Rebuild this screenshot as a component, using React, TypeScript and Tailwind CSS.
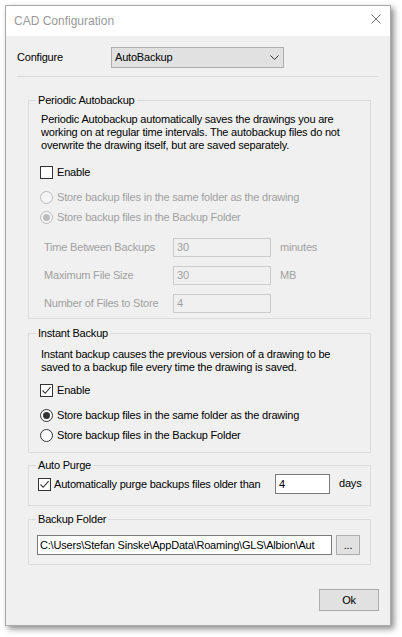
import type { ReactNode } from "react";

const font = { fontFamily: '"Liberation Sans", Arial, sans-serif' };

function CheckBox({ checked }: { checked?: boolean }) {
  return (
    <span className="w-[13px] h-[13px] shrink-0 border border-[#333333] bg-white flex items-center justify-center">
      {checked && (
        <svg width="11" height="11" viewBox="0 0 11 11" aria-hidden="true">
          <path d="M1.5 5.5 L4.2 8.3 L9.6 2.2" fill="none" stroke="#333333" strokeWidth="1.1" />
        </svg>
      )}
    </span>
  );
}

function Radio({ checked, disabled }: { checked?: boolean; disabled?: boolean }) {
  return (
    <span
      className={
        "w-[13px] h-[13px] shrink-0 rounded-full border flex items-center justify-center " +
        (disabled ? "border-[#bcbcbc] bg-[#f4f4f4]" : "border-[#333333] bg-white")
      }
    >
      {checked && (
        <span className={"w-[7px] h-[7px] rounded-full " + (disabled ? "bg-[#bcbcbc]" : "bg-[#333333]")} />
      )}
    </span>
  );
}

function Group({ title, className, children }: { title: string; className?: string; children: ReactNode }) {
  return (
    <fieldset className={"w-[343px] ml-[22px] border border-[#dcdcdc] " + (className ?? "")}>
      <legend className="ml-[7px] px-[2px] leading-[14px] text-black">{title}</legend>
      {children}
    </fieldset>
  );
}

function DisabledField({ label, value, unit }: { label: string; value: string; unit?: string }) {
  return (
    <div className="flex items-center h-[19px]">
      <span className="w-[133px] pl-[4px] text-[#a0a0a0]">{label}</span>
      <div className="w-[98px] h-[19px] border border-[#cccccc] bg-[#f0f0f0] text-[#a0a0a0] pl-[3px] flex items-center">
        {value}
      </div>
      {unit && <span className="ml-[9px] text-[#a0a0a0]">{unit}</span>}
    </div>
  );
}

export default function App() {
  return (
    <div className="w-[402px] h-[637px] bg-white pt-[5px] pl-[5px] text-[11px] tracking-[-0.2px] text-black" style={font}>
      <div className="w-[386px] h-[621px] border border-[#a9a9a9] shadow-[3px_3px_6px_rgba(0,0,0,0.45)] flex flex-col">
        {/* Title bar */}
        <div className="h-[30px] bg-white flex items-center justify-between pl-[8px] pr-[9px]">
          <span className="text-[12px] tracking-normal text-[#999999]">CAD Configuration</span>
          <svg width="10" height="10" viewBox="0 0 10 10" className="self-start mt-[8px]" aria-hidden="true">
            <path d="M0.5 0.5 L9.5 9.5 M9.5 0.5 L0.5 9.5" stroke="#777777" strokeWidth="1" />
          </svg>
        </div>

        {/* Body */}
        <div className="flex-1 bg-[#f0f0f0] pt-[11px]">
          <div className="px-[11px]">
            <div className="flex items-center h-[21px]">
              <span className="w-[94px]">Configure</span>
              <div className="w-[173px] h-[21px] border border-[#adadad] bg-[#e1e1e1] flex items-center justify-between pl-[3px] pr-[4px]">
                <span>AutoBackup</span>
                <svg width="9" height="5" viewBox="0 0 9 5" aria-hidden="true">
                  <path d="M0.5 0.5 L4.5 4.5 L8.5 0.5" fill="none" stroke="#333333" strokeWidth="1" />
                </svg>
              </div>
            </div>
            <div className="mt-[8px] h-px bg-[#dcdcdc]" />
          </div>

          <Group title="Periodic Autobackup" className="mt-[16px]">
            <div className="pl-[11px] pb-[5px]">
              <p className="mt-[6px] pl-[1px] leading-[13px] w-[320px]">
                Periodic Autobackup automatically saves the drawings you are working on at regular time intervals. The
                autobackup files do not overwrite the drawing itself, but are saved separately.
              </p>
              <div className="mt-[10px] h-[20px] flex items-center gap-[4px]">
                <CheckBox />
                <span>Enable</span>
              </div>
              <div className="mt-[5px] h-[20px] flex items-center gap-[4px] text-[#a0a0a0]">
                <Radio disabled />
                <span>Store backup files in the same folder as the drawing</span>
              </div>
              <div className="h-[20px] flex items-center gap-[4px] text-[#a0a0a0]">
                <Radio disabled checked />
                <span>Store backup files in the Backup Folder</span>
              </div>
              <div className="mt-[11px] flex flex-col gap-[9px]">
                <DisabledField label="Time Between Backups" value="30" unit="minutes" />
                <DisabledField label="Maximum File Size" value="30" unit="MB" />
                <DisabledField label="Number of Files to Store" value="4" />
              </div>
            </div>
          </Group>

          <Group title="Instant Backup" className="mt-[7px]">
            <div className="pl-[11px] pb-[7px]">
              <p className="mt-[8px] pl-[1px] leading-[13px] w-[320px]">
                Instant backup causes the previous version of a drawing to be saved to a backup file every time the
                drawing is saved.
              </p>
              <div className="mt-[6px] h-[20px] flex items-center gap-[4px]">
                <CheckBox checked />
                <span>Enable</span>
              </div>
              <div className="mt-[5px] h-[20px] flex items-center gap-[4px]">
                <Radio checked />
                <span>Store backup files in the same folder as the drawing</span>
              </div>
              <div className="h-[20px] flex items-center gap-[4px]">
                <Radio />
                <span>Store backup files in the Backup Folder</span>
              </div>
            </div>
          </Group>

          <Group title="Auto Purge" className="mt-[5px]">
            <div className="pl-[9px] pb-[11px]">
              <div className="mt-[2px] h-[20px] flex items-center">
                <div className="w-[237px] flex items-center gap-[3px]">
                  <CheckBox checked />
                  <span>Automatically purge backups files older than</span>
                </div>
                <div className="w-[55px] h-[20px] border border-[#7a7a7a] bg-white pl-[3px] flex items-center">4</div>
                <span className="ml-[9px] -mt-[2px]">days</span>
              </div>
            </div>
          </Group>

          <Group title="Backup Folder" className="mt-[6px]">
            <div className="pl-[8px] pb-[9px]">
              <div className="mt-[9px] flex items-center">
                <div className="w-[295px] h-[20px] border border-[#7a7a7a] bg-white pl-[2px] flex items-center whitespace-nowrap">
                  C:\Users\Stefan Sinske\AppData\Roaming\GLS\Albion\Aut
                </div>
                <button className="ml-[4px] w-[24px] h-[20px] border border-[#adadad] bg-[#e1e1e1] flex items-center justify-center leading-none">
                  ...
                </button>
              </div>
            </div>
          </Group>

          <div className="px-[11px] mt-[24px] flex justify-end">
            <button className="w-[60px] h-[22px] border border-[#adadad] bg-[#e1e1e1] flex items-center justify-center">
              Ok
            </button>
          </div>
        </div>
      </div>
    </div>
  );
}
